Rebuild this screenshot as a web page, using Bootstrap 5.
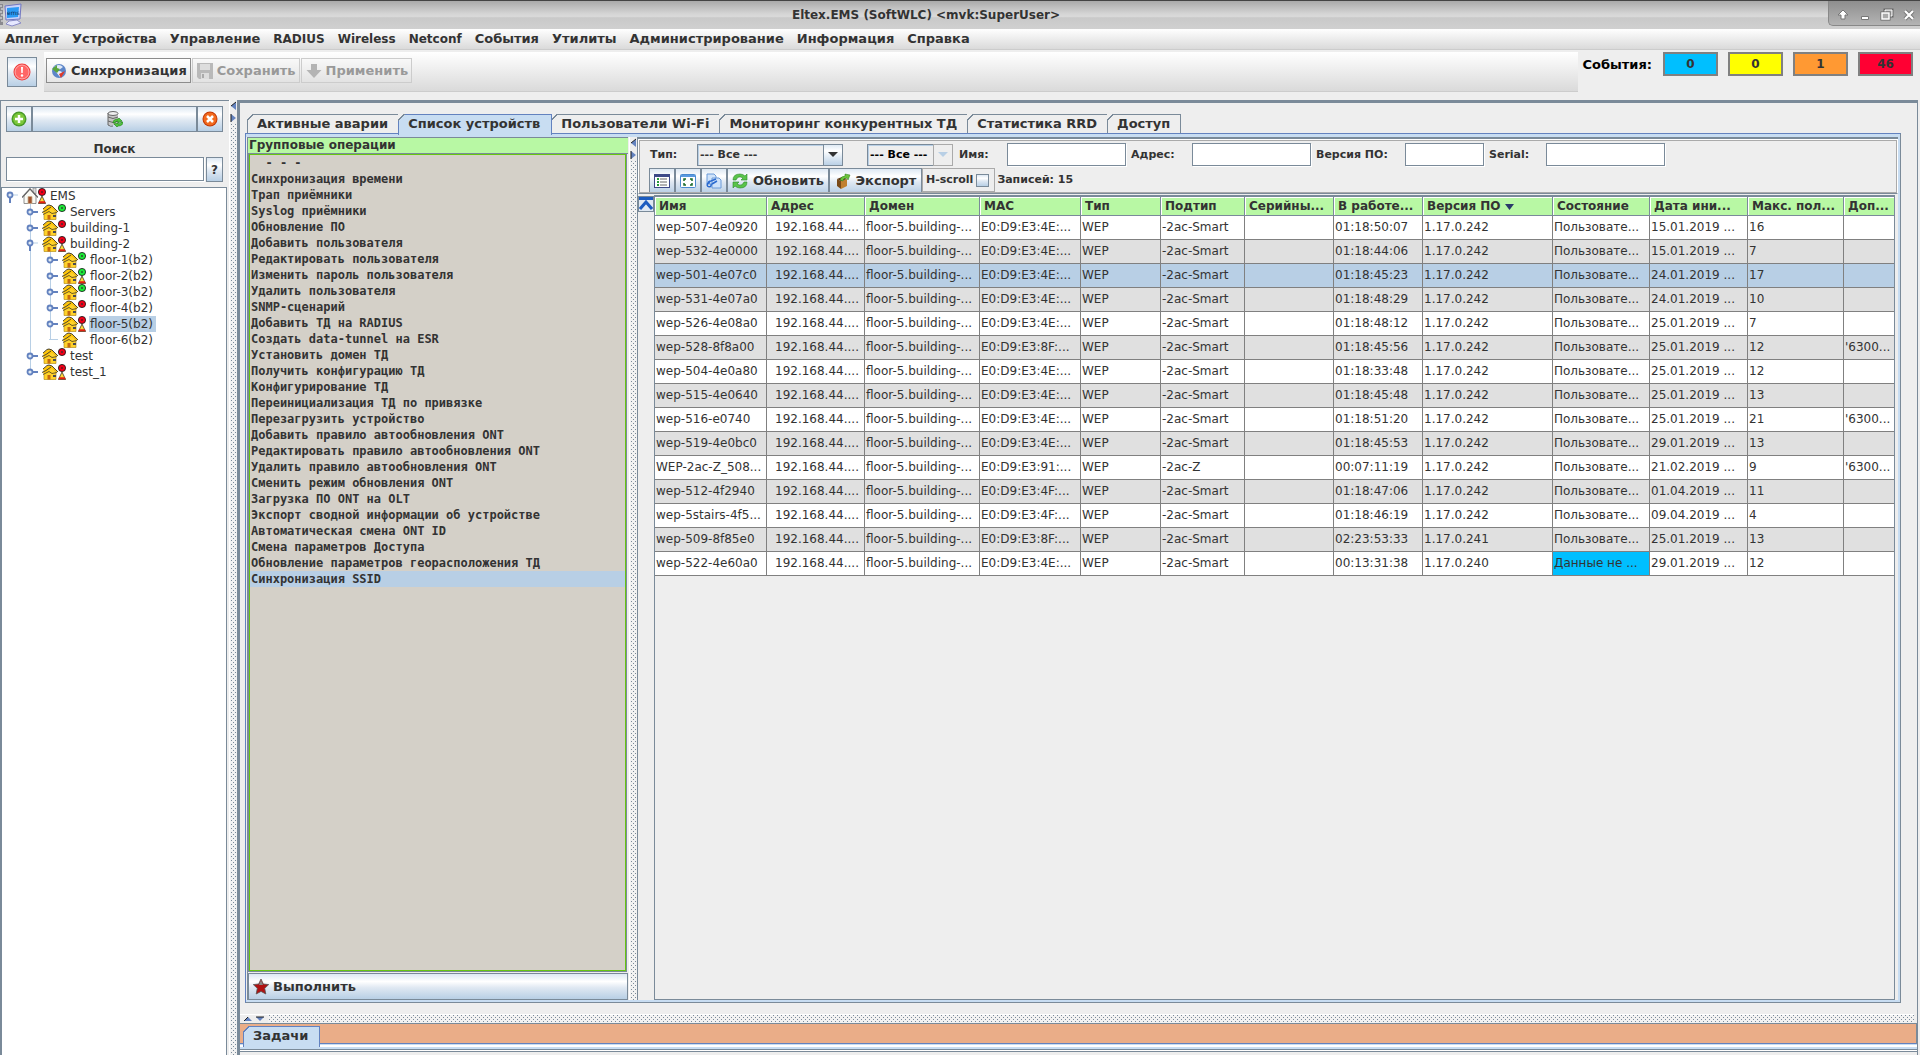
<!DOCTYPE html>
<html lang="ru">
<head>
<meta charset="utf-8">
<meta name="viewport" content="width=device-width, initial-scale=1">
<title>Eltex.EMS (SoftWLC)</title>
<link rel="stylesheet" href="https://cdn.jsdelivr.net/npm/bootstrap@5.3.0/dist/css/bootstrap.min.css">
<style>
:root{--edge:#7a8a99;--blue:#6382bf;--pick:#b8cfe5;--soft:#c8ddf2;--face:#eee;--ink:#333;
 --metal:linear-gradient(#dde8f3 0,#fff 30%,#dfe8f2 55%,#b8cfe5 100%)}
body{font-family:"DejaVu Sans",sans-serif;font-size:12px;line-height:16px;color:var(--ink);background:var(--face);min-height:100vh;overflow:hidden}
.heavy,.menu-strip,.cmd,.tab-item,.dev-table th{font-weight:700}
svg{flex:none;display:block}
button,input,select{font:inherit;color:inherit;border-radius:0}
a{color:inherit;text-decoration:none}
.title-strip{height:29px;border-top:1px solid #444;background:linear-gradient(#aaa,#d4d4d4 45%,#dadada 55%,#c9c9c9 60%,#d0d0d0)}
.app-title{line-height:29px;padding-right:68px}
.app-mark{left:0;top:2px}
.win-keys{position:absolute;right:0;top:0;height:25px;width:92px;background:linear-gradient(#8e8e8e,#b4b4b4);border-bottom-left-radius:5px;border:1px solid #888;border-width:0 0 1px 1px}
.win-keys button{width:22px;border:0;background:none;padding:0}
.menu-strip{height:21px;background:linear-gradient(#fff,#dadada);border-bottom:1px solid #ccc;padding-left:5px;gap:13px;font-size:13px}
.menu-strip .latin{font-size:12px}
.tool-area{height:50px}
.tool-strip{height:40px;margin-top:2px;background:linear-gradient(#fff,#dadada);border-bottom:1px solid #ccc;padding:6px 2px 8px;gap:1px}
.metal{background:var(--metal);border:1px solid var(--edge);padding:0;display:flex;align-items:center;justify-content:center}
.alarm-key{width:30px;height:30px;margin:7px 7px 0}
.cmd{height:25px;background:linear-gradient(#fff,#e6e6e6);border:1px solid #8c8c8c;padding:0 3px 0 4px;gap:4px;display:flex;align-items:center;font-size:13px}
.cmd:disabled{background:transparent;color:#999;border-color:#ccc;opacity:1}
.events{padding:2px 7px 0 0}
.events-lbl{padding:5px 11px 0 5px;font-size:13px}
.count-box{width:55px;height:24px;border:2px solid #808080;padding:0;line-height:20px;font-weight:700}
.lv-info{background:#00bfff}.lv-minor{background:#ff0}.lv-major{background:#f93}.lv-crit{background:#f03}
.side{width:229px;border-top:1px solid var(--edge);border-left:1px solid var(--edge)}
.side-top{padding:5px 6px 0 5px}
.side-top .metal{height:26px}
.find-lbl{padding:9px 0 0}
.side-top .field{height:24px}
.side-top .help-key{width:17px;height:25px}
.field{border:1px solid var(--edge);background:#fff;padding:0 3px;min-width:0;box-shadow:1px 1px #fff}
.tree-box{background:#fff;border:1px solid var(--edge);border-width:1px 1px 0 1px;margin:5px 2px 0 0}
.tree-box ul{list-style:none;margin:0;padding:0}
.tree-box ul ul{padding-left:20px;position:relative}
.tree-box ul ul::before{content:"";position:absolute;left:28px;top:0;bottom:8px;width:1px;background:var(--pick)}
.node{display:flex;height:16px;align-items:center;padding-left:4px;position:relative}
.node .gap4{width:4px}.node .gap8{width:8px}
.node .lbl{padding:0 3px 0 1px;margin-left:3px}
.lbl.on{background:var(--pick)}
.ladder{background:#f2f2f2 url("data:image/svg+xml,%3Csvg xmlns='http://www.w3.org/2000/svg' width='4' height='4'%3E%3Cpath d='M1 0h1v1H1zM3 2h1v1H3z' fill='%237a8a99'/%3E%3C/svg%3E")}
.v-split{width:8px;border-left:1px solid #fff}
.v-split svg{background:#eee}
.main-pane{border:3px solid var(--edge);border-width:3px 1px 0 3px;margin-right:2px;min-width:0}
.tab-row{padding:11px 0 0 7px}
.tab-item{height:19px;border:1px solid var(--edge);border-bottom:0;background:var(--face);padding:0 10px 0 9px;position:relative;line-height:16px;margin-right:-1px;font-size:13px}
.tab-item::before{content:"";position:absolute;left:-1px;top:-1px;width:7px;height:7px;background:linear-gradient(135deg,#eee 0 4px,var(--edge) 4px 5px,transparent 5px)}
.tab-item.on{background:var(--soft);border-color:var(--blue);height:21px;padding-bottom:2px;padding-right:11px;margin-bottom:-2px;z-index:1}
.tab-body{border:1px solid var(--blue);border-color:var(--blue) var(--edge) var(--edge) var(--blue);margin:0 16px 11px 5px;padding:3px 2px 2px 1px;box-shadow:inset 0 3px var(--soft),inset -2px -2px var(--soft);min-height:0}
.ops{width:381px;border-left:1px solid var(--edge);border-top:1px solid var(--edge);margin-right:1px}
.ops-head{background:#b8f8a4;height:16px;line-height:15px;border-bottom:1px solid var(--edge);padding-left:1px}
.ops-list{font-family:"DejaVu Sans Mono",monospace;font-weight:700;background:#d4d0c8;border:1px solid #66c610;outline:1px solid var(--edge);margin:0 2px 0 1px}
.ops-list .op{display:block;padding:0 1px;height:16px;line-height:16px;white-space:pre;border:0;background:none;text-align:left;width:100%}
.ops-list .op.on{background:var(--pick)}
.run-key{height:27px;justify-content:flex-start;padding-left:4px;gap:4px;margin-top:2px;font-size:13px}
.dev{border-left:1px solid var(--edge);border-top:2px solid var(--edge);min-width:0}
.filters{border:1px solid #fff;outline:1px solid #aaa;outline-offset:-2px;height:55px;border-bottom:1px solid var(--edge);font-size:11px;padding:2px 0 0 10px}
.filters label{font-weight:700}
.filters .field{height:23px;font-size:12px;width:119px}
.filters .field.short{width:79px}
.filters .r1{height:25px;margin:0 0 1px 1px;display:grid;grid-template-columns:47px 170px 92px 48px 124px 61px 124px 89px 84px 57px 119px;align-items:center}
.pick-wrap{position:relative;height:22px}
.pick-wrap.kind{width:146px}.pick-wrap.sub{width:86px}
.pick-wrap select{appearance:none;height:22px;width:100%;border:1px solid var(--edge);background:#eee;padding:0 20px 0 2px;font-weight:700;box-shadow:inset 1px 1px var(--pick)}
.pick-wrap svg{position:absolute;right:0;top:0;pointer-events:none}
.filters .cmds .metal{height:26px;font-size:13px;font-weight:700;gap:5px}
.filters .metal.refresh{width:102px}.filters .metal.export{width:93px}
.sq{width:26px}
.hs{height:24px;border:1px solid #aaa;padding:0 5px 0 3px;gap:3px}
.hs input{appearance:none;width:13px;height:13px;border:1px solid var(--edge);background:var(--metal);margin:0}
.total{padding:4px 0 0 2px}
.up-key{width:16px;height:16px;margin:1px 0 0;border:1px solid var(--edge);padding:0;background:#dfe8f2}
.grid-area{padding-top:1px;min-height:0}
.grid-box{border:1px solid var(--edge);border-top:2px solid var(--edge);margin-right:3px;min-width:0;overflow:hidden}
.dev-table{table-layout:fixed;width:100%;border-collapse:separate;border-spacing:0}
.dev-table th{background:#b8f8a4;height:19px;padding:0 0 0 4px;border-right:1px solid var(--edge);border-bottom:1px solid var(--edge);box-shadow:inset 1px 1px #fff;line-height:18px;white-space:nowrap;overflow:hidden}
.dev-table td{height:24px;padding:0 0 0 1px;border-right:1px solid #808080;border-bottom:1px solid #808080;background:#fff;line-height:23px;white-space:nowrap;overflow:hidden}
.dev-table tbody tr:nth-child(even) td{background:#e0e0e0}
.dev-table tbody tr.on td{background:var(--pick)}
.dev-table tbody td.lost{background:#00bfff}
.dev-table td:nth-child(2){padding-left:8px}
.h-split{height:9px;border-top:1px solid #fff;margin-right:3px}
.h-split svg{background:#eee}
.task-dock{background:#eaad88;border:1px solid var(--edge);border-left:0;height:21px;padding:2px 0 0 3px;border-bottom:1px solid var(--blue)}
.task-dock .tab-item::before{background:linear-gradient(135deg,#eaad88 0 4px,var(--blue) 4px 5px,transparent 5px)}
.task-foot{height:11px;background:linear-gradient(#c8ddf2 0 1px,#fff 1px 3px,#c8ddf2 3px 5px,#7a8a99 5px 6px,#fff 6px 7px,#7a8a99 7px 8px,#eee 8px)}
</style>
<script src="https://cdn.jsdelivr.net/npm/bootstrap@5.3.0/dist/js/bootstrap.bundle.min.js"></script>
</head>
<body class="d-flex flex-column">
<svg width="0" height="0" class="position-absolute" aria-hidden="true">
 <linearGradient id="mg" x2="0" y2="1"><stop offset="0" stop-color="#dde8f3"/><stop offset=".3" stop-color="#fff"/><stop offset="1" stop-color="#b8cfe5"/></linearGradient>
 <symbol id="i-house" viewBox="0 0 16 16"><path d="M2 7v8.500h12V8L7 1z" fill="#ffd22a" stroke="#a8820f" stroke-width=".6"/><path d="M1 5l5-4 4 1 6 5.500-1 1-5-4-4 3-4 2-1-1 1-1z" fill="#ffc60a"/><path d="M1 5l4-3.500L7 1l3 1 6 6M0 8.500l4-2 5-3.500" fill="none" stroke="#4a4430" stroke-width="1"/><path d="M1 10.500l6-3 3 2 5-1" fill="none" stroke="#5a4a20" stroke-width=".9"/><path d="M5.500 11h3v4.500h-3z" fill="#c46a10"/><path d="M11 11h3v2h-3z" fill="#4a4a50"/></symbol>
 <symbol id="i-root" viewBox="0 0 16 16"><path d="M11 0h3v6h-3z" fill="#ddd" stroke="#777" stroke-width=".6"/><path d="M2 8v7.500h12V8L8 1z" fill="#fafaf4" stroke="#777" stroke-width=".8"/><path d="M0 9.500L8 .8l8 8.700" fill="none" stroke="#666" stroke-width="1.300"/><path d="M6 8.500h4v7H6z" fill="#a0522d" stroke="#c8b090" stroke-width=".8"/></symbol>
 <symbol id="i-shut" viewBox="0 0 12 16"><path d="M6 8h6" stroke="#6382bf" stroke-width="2"/><circle cx="4" cy="8" r="2.500" fill="#dfe9f5" stroke="#6382bf" stroke-width="1.800"/></symbol>
 <symbol id="i-open" viewBox="0 0 12 16"><path d="M7 7h5" stroke="#b8cfe5"/><path d="M4 9v6" stroke="#6382bf" stroke-width="2"/><circle cx="4" cy="7" r="2.500" fill="#dfe9f5" stroke="#6382bf" stroke-width="1.800"/></symbol>
 <symbol id="i-leaf" viewBox="0 0 12 16"><path d="M3 7.500h9" stroke="#b8cfe5"/></symbol>
 <symbol id="i-dot" viewBox="0 0 8 16"><circle cx="4" cy="4" r="3.600" fill="currentColor" stroke="#111" stroke-width=".8"/><path d="M4 3v2M3 4h2" stroke="#333" stroke-width=".8"/></symbol>
 <symbol id="i-warn" viewBox="0 0 8 16"><circle cx="4" cy="4" r="3.600" fill="currentColor" stroke="#111" stroke-width=".8"/><path d="M3 4h2" stroke="#222"/><path d="M4 8L7.600 15.500H.4z" fill="#ffd83a" stroke="#222" stroke-width=".7"/><path d="M1.200 13.300h5.600l.9 2H.3z" fill="#e02010"/></symbol>
 <symbol id="i-vsplit" viewBox="0 0 7 24"><path d="M6 2L1 6l5 4z" fill="#6382bf"/><path d="M6 2L1 6" stroke="#222"/><path d="M1 14l5 4-5 4z" fill="#6382bf"/><path d="M1 14v8" stroke="#222"/></symbol>
 <symbol id="i-fall" viewBox="0 0 20 22"><path d="M5 8h10l-5 5z" fill="currentColor"/></symbol>
</svg>

<header class="title-strip position-relative flex-shrink-0">
 <svg class="position-absolute app-mark" width="23" height="24" viewBox="0 0 23 24"><path d="M0 1h3v21H0z" fill="#8a8a90"/><path d="M0 3h2M1 6h2M0 9h2M1 12h2M0 15h2M1 18h2" stroke="#eee"/><path d="M5 3l16-2-1 15-14 1z" fill="#c9d3fb" stroke="#7277c0"/><path d="M7 5l12-1-1 10-11 1z" fill="#2a9af4"/><path d="M9 18l8-1 4 3-9 3-6-2z" fill="#e6e8ff" stroke="#8a8cc8"/><text x="7" y="12" font-size="6" fill="#0b2a55">ems</text></svg>
 <div class="app-title heavy text-center">Eltex.EMS (SoftWLC) &lt;mvk:SuperUser&gt;</div>
 <div class="win-keys d-flex justify-content-end">
  <button aria-label="Свернуть вверх"><svg width="22" height="24"><path d="M11 9l5 5h-3v4H9v-4H6z" fill="#fff" stroke="#777"/></svg></button>
  <button aria-label="Свернуть"><svg width="22" height="24"><path d="M7.500 15.500h7v3h-7z" fill="#fff" stroke="#777"/></svg></button>
  <button aria-label="Восстановить"><svg width="22" height="24"><path d="M9 9h7v6h-7z" fill="none" stroke="#666" stroke-width="3"/><path d="M9 9h7v6h-7z" fill="#aaa" stroke="#fff"/><path d="M6 12h7v6H6z" fill="#aaa" stroke="#666" stroke-width="3"/><path d="M6 12h7v6H6z" fill="#aaa" stroke="#fff" stroke-width="1.500"/></svg></button>
  <button aria-label="Закрыть"><svg width="22" height="24"><path d="M7 10l8 8M15 10l-8 8" stroke="#777" stroke-width="4"/><path d="M7 10l8 8M15 10l-8 8" stroke="#fff" stroke-width="2.200"/></svg></button>
 </div>
</header>

<nav class="menu-strip d-flex align-items-center flex-shrink-0">
 <a href="#">Апплет</a><a href="#">Устройства</a><a href="#">Управление</a><a href="#" class="latin">RADIUS</a><a href="#" class="latin">Wireless</a><a href="#" class="latin">Netconf</a><a href="#">События</a><a href="#">Утилиты</a><a href="#">Администрирование</a><a href="#">Информация</a><a href="#">Справка</a>
</nav>

<section class="tool-area d-flex flex-shrink-0">
 <button class="metal alarm-key" aria-label="Тревога"><svg width="18" height="18"><circle cx="9" cy="9" r="8.500" fill="#ef3b3b"/><circle cx="9" cy="9" r="7" fill="#f66" stroke="#ffb0b0"/><path d="M8 4h2l-.3 6H8.300z" fill="#fff"/><circle cx="9" cy="12.500" r="1.200" fill="#fff"/></svg></button>
 <div class="tool-strip d-flex flex-grow-1">
  <button class="cmd"><svg width="16" height="16"><circle cx="8" cy="8" r="7" fill="#5d86c8"/><path d="M3 4q5-4 9 0l-4 3z" fill="#dfe9f8"/><path d="M5 9q3-2 6 0l-2 5z" fill="#e8eefc"/><path d="M1 6l5-4v3l3 1-3 4z" fill="#5aa53a"/><path d="M14 8l-4 7-2-4z" fill="#e03a2a"/></svg>Синхронизация</button>
  <button class="cmd" disabled><svg width="16" height="16"><path d="M0 0h16v16H2l-2-2z" fill="#b9b9b9"/><path d="M3 1h10v6H3zM4 10h8v6H4z" fill="#ddd"/><path d="M5 11h2v4H5z" fill="#aaa"/></svg>Сохранить</button>
  <button class="cmd" disabled><svg width="16" height="16"><path d="M5 1h6v6h4.500L8 15 .5 7H5z" fill="#b4b4b4"/></svg>Применить</button>
 </div>
 <div class="events d-flex align-items-start flex-shrink-0"><span class="events-lbl heavy text-black">События:</span>
  <div class="d-flex" style="gap:10px"><button class="count-box lv-info">0</button><button class="count-box lv-minor">0</button><button class="count-box lv-major">1</button><button class="count-box lv-crit">46</button></div>
 </div>
</section>

<div class="d-flex flex-grow-1">
 <aside class="side d-flex flex-column flex-shrink-0">
  <div class="side-top">
   <div class="d-flex">
    <button class="metal sq" aria-label="Добавить"><svg width="16" height="16"><circle cx="8" cy="8" r="7.500" fill="#4a9a2a"/><circle cx="8" cy="8" r="6" fill="#7cc83a"/><path d="M8 4v8M4 8h8" stroke="#fff" stroke-width="2.500"/></svg></button>
    <button class="metal flex-grow-1" aria-label="Обновить дерево"><svg width="16" height="16"><path d="M1 2h10v12H1z" fill="#c4c4c4"/><ellipse cx="6" cy="2.500" rx="5" ry="2" fill="#eee" stroke="#666"/><path d="M1 6q5 3 10 0M1 10q5 3 10 0M1 2v12q3 2 5 1" fill="none" stroke="#666"/><path d="M6 12q0-4 5-4l1-1 3 3-4 2v-2q-3 0-3 2z" fill="#4fc43a" stroke="#1f7a18" stroke-width=".6"/><path d="M16 11q0 4-5 4l-1 1-3-3 4-1v1q3 0 3-2z" fill="#4fc43a" stroke="#1f7a18" stroke-width=".6"/></svg></button>
    <button class="metal sq" aria-label="Удалить"><svg width="16" height="16"><circle cx="8" cy="8" r="7.500" fill="#c23a08"/><circle cx="8" cy="8" r="6.500" fill="#f26a1e"/><path d="M5 5l6 6M11 5l-6 6" stroke="#fff" stroke-width="2.500"/></svg></button>
   </div>
   <label class="find-lbl heavy d-block text-center" for="q">Поиск</label>
   <div class="d-flex" style="gap:2px"><input id="q" class="field flex-grow-1"><button class="metal heavy help-key">?</button></div>
  </div>
  <div class="tree-box flex-grow-1" id="tree"></div>
 </aside>
 <div class="v-split ladder flex-shrink-0"><svg width="7" height="24"><use href="#i-vsplit"/></svg></div>

 <main class="main-pane flex-grow-1 d-flex flex-column">
  <div class="tab-row d-flex align-items-start" role="tablist">
   <button class="tab-item" role="tab">Активные аварии</button><button class="tab-item on" role="tab">Список устройств</button><button class="tab-item" role="tab">Пользователи Wi-Fi</button><button class="tab-item" role="tab">Мониторинг конкурентных ТД</button><button class="tab-item" role="tab">Статистика RRD</button><button class="tab-item" role="tab">Доступ</button>
  </div>
  <div class="tab-body d-flex flex-grow-1">
   <section class="ops d-flex flex-column flex-shrink-0">
    <div class="ops-head heavy">Групповые операции</div>
    <div class="ops-list flex-grow-1" id="ops"></div>
    <button class="metal heavy run-key"><svg width="16" height="16"><path d="M8 0l2.300 5 5.400.6-4 3.700 1.100 5.700L8 12.400 3.200 15l1.100-5.700-4-3.700L5.700 5z" fill="#b01212" stroke="#555" stroke-width=".8"/><path d="M8 1l2 5H6z" fill="#888"/></svg>Выполнить</button>
   </section>
   <div class="v-split ladder flex-shrink-0"><svg width="7" height="24"><use href="#i-vsplit"/></svg></div>
   <section class="dev flex-grow-1 d-flex flex-column">
    <form class="filters">
     <div class="r1">
      <label for="f1">Тип:</label><div class="pick-wrap kind"><select id="f1"><option>--- Все ---</option></select><svg width="20" height="22"><rect x=".5" y=".5" width="19" height="21" fill="url(#mg)" stroke="#7a8a99"/><use href="#i-fall"/></svg></div>
      <div class="pick-wrap sub"><select aria-label="Подтип" disabled class="text-black opacity-100"><option>--- Все ---</option></select><svg width="20" height="22" color="#b8cfe5"><rect x=".5" y=".5" width="19" height="21" fill="#eee" stroke="#aaa"/><use href="#i-fall"/></svg></div>
      <label for="f2">Имя:</label><input id="f2" class="field"><label for="f3">Адрес:</label><input id="f3" class="field"><label for="f4">Версия ПО:</label><input id="f4" class="field short"><label for="f5">Serial:</label><input id="f5" class="field">
     </div>
     <div class="cmds d-flex align-items-start">
      <button type="button" class="metal sq" aria-label="Список"><svg width="16" height="16"><rect x=".5" y="1.500" width="15" height="13" fill="#fff" stroke="#3e4a88"/><path d="M1 3h14" stroke="#3e4a88" stroke-width="2"/><path d="M3 6h2M3 9h2M3 12h2" stroke="#2a9a3a" stroke-width="2"/><path d="M6 6h7M6 9h7M6 12h7" stroke="#666"/></svg></button>
      <button type="button" class="metal sq" aria-label="Окно"><svg width="16" height="16"><rect x=".5" y="1.500" width="15" height="13" rx="1" fill="#fff" stroke="#4a8ad0"/><path d="M1 3h14" stroke="#5a9ae0" stroke-width="2"/><path d="M6 6H4v2M10 6h2v2M6 12H4v-2M10 12h2v-2" fill="none" stroke="#186a28" stroke-width="1.500"/></svg></button>
      <button type="button" class="metal sq" aria-label="Копировать"><svg width="16" height="16"><path d="M1 1h7l2 2v8H1z" fill="#cfe3fa" stroke="#6a9ad8"/><path d="M6 5h7l2 2v8H6z" fill="#cfe3fa" stroke="#6a9ad8"/><path d="M2 11q0-3 3-3l5-2M6 11l5-3M4 10a2 2 0 1 0 1 1" fill="none" stroke="#2a6ad0" stroke-width="1.500"/></svg></button>
      <button type="button" class="metal refresh"><svg width="16" height="16"><path d="M1 7q0-6 7-6 3 0 5 2l2-2v6H9l2-2q-5-3-7 2z" fill="#5ac44a" stroke="#2a8a2a" stroke-width=".6"/><path d="M15 9q0 6-7 6-3 0-5-2l-2 2V9h6l-2 2q5 3 7-2z" fill="#5ac44a" stroke="#2a8a2a" stroke-width=".6"/></svg>Обновить</button>
      <button type="button" class="metal export"><svg width="16" height="16"><path d="M2 6l4 2v8l-4-3z" fill="#7a4a18"/><path d="M6 8l6-2v7l-6 3z" fill="#c08030"/><path d="M2 6l5-2 5 2-6 2z" fill="#5a3410"/><path d="M5 7q1-4 5-4V1l5 1-2 5-1-2q-4 0-4 3z" fill="#6ac43a" stroke="#2a7a1a" stroke-width=".5"/></svg>Экспорт</button>
      <label class="hs d-flex align-items-center">H-scroll <input type="checkbox"></label>
      <span class="heavy total">Записей: 15</span>
     </div>
    </form>
    <div class="grid-area d-flex flex-grow-1">
     <button class="up-key flex-shrink-0" aria-label="Вверх"><svg width="14" height="14"><path d="M0 0h14v3H0z" fill="#1c5cc0"/><path d="M1 12l6-7 6 7" fill="none" stroke="#1c5cc0" stroke-width="3"/></svg></button>
     <div class="grid-box flex-grow-1"><table class="dev-table"><colgroup id="cols"></colgroup><thead><tr id="heads"></tr></thead><tbody id="rows"></tbody></table></div>
    </div>
   </section>
  </div>
  <div class="h-split ladder flex-shrink-0"><svg width="28" height="8"><path d="M4 6l4-4 4 4zM16 2h8l-4 4z" fill="#6382bf"/><path d="M4 6l4-4M16 2h8" stroke="#222"/></svg></div>
  <div class="task-dock flex-shrink-0 d-flex align-items-start"><button class="tab-item on">Задачи</button></div>
  <div class="task-foot flex-shrink-0"></div>
 </main>
</div>
<script>
const use=(id,w,color)=>`<svg width="${w}" height="16"${color?` color="${color}"`:''}><use href="#i-${id}"/></svg>`;
const R='#f00018',G='#1ee838';
const tree={n:'EMS',i:'root',h:'open',c:R,w:1,k:[
 {n:'Servers',c:G},{n:'building-1',c:R},
 {n:'building-2',c:R,w:1,h:'open',k:[{n:'floor-1(b2)',c:G},{n:'floor-2(b2)',c:G,w:1},{n:'floor-3(b2)',c:G},{n:'floor-4(b2)',c:R},{n:'floor-5(b2)',c:R,w:1,on:1},{n:'floor-6(b2)',h:'leaf'}]},
 {n:'test',c:R},{n:'test_1',c:R,w:1}]};
const node=t=>`<li><div class="node">${use(t.h||'shut',12)}<span class="gap4"></span>${use(t.i||'house',16)}${t.c?use(t.w?'warn':'dot',8,t.c):'<span class="gap8"></span>'}<span class="lbl${t.on?' on':''}">${t.n}</span></div>${t.k?`<ul>${t.k.map(node).join('')}</ul>`:''}</li>`;
document.getElementById('tree').innerHTML='<ul>'+node(tree)+'</ul>';

const ops=['  - - -','Синхронизация времени','Трап приёмники','Syslog приёмники','Обновление ПО','Добавить пользователя','Редактировать пользователя','Изменить пароль пользователя','Удалить пользователя','SNMP-сценарий','Добавить ТД на RADIUS','Создать data-tunnel на ESR','Установить домен ТД','Получить конфигурацию ТД','Конфигурирование ТД','Переинициализация ТД по привязке','Перезагрузить устройство','Добавить правило автообновления ONT','Редактировать правило автообновления ONT','Удалить правило автообновления ONT','Сменить режим обновления ONT','Загрузка ПО ONT на OLT','Экспорт сводной информации об устройстве','Автоматическая смена ONT ID','Смена параметров Доступа','Обновление параметров георасположения ТД','Синхронизация SSID'];
document.getElementById('ops').innerHTML=ops.map((o,i)=>`<button class="op${i===26?' on':''}">${o}</button>`).join('');

const cols=[['Имя',112],['Адрес',98],['Домен',115],['MAC',101],['Тип',80],['Подтип',84],['Серийны...',89],['В работе...',89],['Версия ПО',130],['Состояние',97],['Дата ини...',98],['Макс. пол...',96],['Доп...',52]];
document.getElementById('cols').innerHTML=cols.map(c=>`<col style="width:${c[1]}px">`).join('');
document.getElementById('heads').innerHTML=cols.map((c,i)=>`<th scope="col">${c[0]}${i===8?' <svg class="d-inline-block" width="10" height="8"><path d="M0 1h9L4.500 7z" fill="#2a3a6a"/></svg>':''}</th>`).join('');
const data=[
 ['wep-507-4e0920','4E','01:18:50:07','242','15.01.2019','16'],
 ['wep-532-4e0000','4E','01:18:44:06','242','15.01.2019','7'],
 ['wep-501-4e07c0','4E','01:18:45:23','242','24.01.2019','17'],
 ['wep-531-4e07a0','4E','01:18:48:29','242','24.01.2019','10'],
 ['wep-526-4e08a0','4E','01:18:48:12','242','25.01.2019','7'],
 ['wep-528-8f8a00','8F','01:18:45:56','242','25.01.2019','12',1],
 ['wep-504-4e0a80','4E','01:18:33:48','242','25.01.2019','12'],
 ['wep-515-4e0640','4E','01:18:45:48','242','25.01.2019','13'],
 ['wep-516-e0740','4E','01:18:51:20','242','25.01.2019','21',1],
 ['wep-519-4e0bc0','4E','01:18:45:53','242','29.01.2019','13'],
 ['WEP-2ac-Z_508...','91','00:07:11:19','242','21.02.2019','9',1],
 ['wep-512-4f2940','4F','01:18:47:06','242','01.04.2019','11'],
 ['wep-5stairs-4f5...','4F','01:18:46:19','242','09.04.2019','4'],
 ['wep-509-8f85e0','8F','02:23:53:33','241','25.01.2019','13'],
 ['wep-522-4e60a0','4E','00:13:31:38','240','29.01.2019','12']];
document.getElementById('rows').innerHTML=data.map((d,i)=>{
 const lost=i===14;
 const v=[d[0],'192.168.44....','floor-5.building-...',`E0:D9:E3:${d[1]}:...`,'WEP',i===10?'-2ac-Z':'-2ac-Smart','',d[2],'1.17.0.'+d[3],lost?'Данные не ...':'Пользовате...',d[4]+' ...',d[5],d[6]?"'6300...":''];
 return `<tr${i===2?' class="on"':''}>`+v.map((x,j)=>`<td${lost&&j===9?' class="lost"':''}>${x}</td>`).join('')+'</tr>';
}).join('');
</script>
</body>
</html>
